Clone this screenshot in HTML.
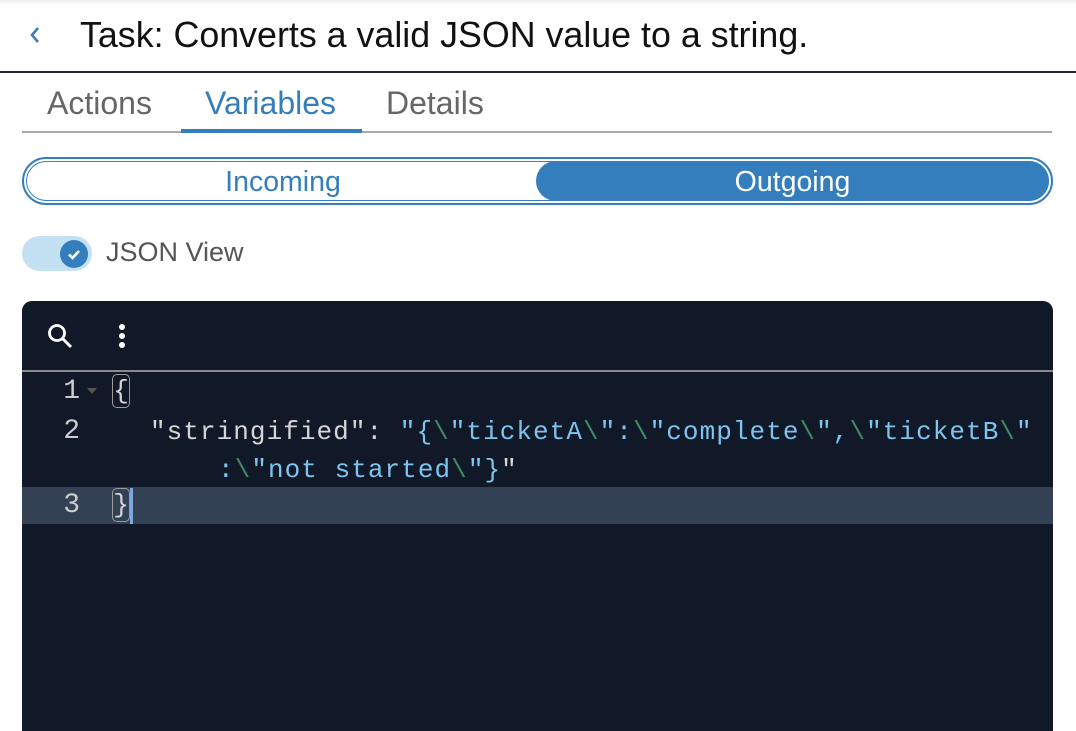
<!DOCTYPE html>
<html><head><style>
*{margin:0;padding:0;box-sizing:border-box}
body{width:1076px;height:722px;overflow:hidden;background:#fff;font-family:"Liberation Sans",Roboto,sans-serif;position:relative}
.abs{position:absolute}
.code{font-family:"Liberation Mono",monospace;font-size:26px;letter-spacing:1.05px;line-height:38px;white-space:pre}
.k{color:#d6d6d6}.s{color:#7ec4ee}.e{color:#3f8f64}
.br{display:inline-block;border:1.5px solid #9a9a9a;border-radius:5px;height:34px;line-height:32px;vertical-align:top;margin-top:2px;width:18px;text-align:center;letter-spacing:0;color:#d6d6d6}
</style></head><body>
<div class="abs" style="left:0;top:0;width:1076px;height:5px;background:linear-gradient(#eee,#fff)"></div>
<svg class="abs" style="left:28px;top:25px" width="14" height="20" viewBox="0 0 14 20"><path d="M10 3 L4 10 L10 17" stroke="#3a7cbc" stroke-width="2.6" fill="none"/></svg>
<div class="abs" style="left:80px;top:15px;font-size:35.8px;color:#111">Task: Converts a valid JSON value to a string.</div>
<div class="abs" style="left:0;top:71px;width:1076px;height:2px;background:#222631"></div>

<div class="abs" style="left:47px;top:85px;font-size:32px;color:#666">Actions</div>
<div class="abs" style="left:205px;top:85px;font-size:32px;color:#357ebd">Variables</div>
<div class="abs" style="left:386px;top:85px;font-size:32px;color:#666">Details</div>
<div class="abs" style="left:22px;top:131px;width:1030px;height:2px;background:#aaa"></div>
<div class="abs" style="left:181px;top:129px;width:181px;height:4px;background:#357ebd"></div>

<div class="abs" style="left:22px;top:157px;width:1031px;height:48px;border:2px solid #357ebd;border-radius:24px"></div>
<div class="abs" style="left:26px;top:161px;width:1023px;height:40px;border:1.5px solid #357ebd;border-radius:20px"></div>
<div class="abs" style="left:536px;top:161px;width:513px;height:40px;background:#357ebd;border-radius:20px"></div>
<div class="abs" style="left:26px;top:166px;width:514px;text-align:center;font-size:28.5px;color:#357ebd">Incoming</div>
<div class="abs" style="left:536px;top:166px;width:513px;text-align:center;font-size:28.5px;color:#fff">Outgoing</div>

<div class="abs" style="left:22px;top:236px;width:70px;height:35px;background:#c3e1f3;border-radius:18px"></div>
<div class="abs" style="left:60px;top:240px;width:28px;height:28px;background:#357ebd;border-radius:50%"></div>
<svg class="abs" style="left:60px;top:240px" width="28" height="28" viewBox="0 0 28 28"><path d="M9 14.5 L12.5 18 L19 11" stroke="#fff" stroke-width="2.6" fill="none"/></svg>
<div class="abs" style="left:106px;top:237px;font-size:27px;color:#555">JSON View</div>

<div class="abs" style="left:22px;top:301px;width:1031px;height:430px;background:#111827;border-radius:10px 10px 0 0"></div>
<svg class="abs" style="left:46px;top:322px" width="28" height="28" viewBox="0 0 28 28"><circle cx="11" cy="11" r="7.5" stroke="#fff" stroke-width="2.8" fill="none"/><path d="M16.5 16.5 L25 25" stroke="#fff" stroke-width="3"/></svg>
<div class="abs" style="left:119px;top:324px;width:6px;height:6px;border-radius:50%;background:#fff"></div>
<div class="abs" style="left:119px;top:333px;width:6px;height:6px;border-radius:50%;background:#fff"></div>
<div class="abs" style="left:119px;top:342px;width:6px;height:6px;border-radius:50%;background:#fff"></div>
<div class="abs" style="left:22px;top:370px;width:1031px;height:2px;background:#8a8a8a"></div>
<div class="abs" style="left:22px;top:487px;width:1031px;height:37px;background:#334155"></div>
<div class="abs" style="left:130px;top:488px;width:3px;height:36px;background:#7fa7de"></div>

<div class="abs code k" style="left:40px;top:373px;width:40px;text-align:right;color:#ccc;letter-spacing:0;font-size:28px">1</div>
<svg class="abs" style="left:87px;top:388px" width="10" height="6"><path d="M0 0 L10 0 L5 6Z" fill="#555"/></svg>
<div class="abs code k" style="left:40px;top:413px;width:40px;text-align:right;color:#ccc;letter-spacing:0;font-size:28px">2</div>
<div class="abs code k" style="left:40px;top:487px;width:40px;text-align:right;color:#ccc;letter-spacing:0;font-size:28px">3</div>

<div class="abs code" style="left:112px;top:372px"><span class="br">{</span></div>
<div class="abs code" style="left:150px;top:413px"><span class="k">"stringified": </span><span class="s">"{</span><span class="e">\</span><span class="s">"ticketA</span><span class="e">\</span><span class="s">":</span><span class="e">\</span><span class="s">"complete</span><span class="e">\</span><span class="s">",</span><span class="e">\</span><span class="s">"ticketB</span><span class="e">\</span><span class="s">"</span></div>
<div class="abs code" style="left:218px;top:451px"><span class="s">:</span><span class="e">\</span><span class="s">"not started</span><span class="e">\</span><span class="s">"}</span><span class="k">"</span></div>
<div class="abs code" style="left:112px;top:486px"><span class="br">}</span></div>
</body></html>
